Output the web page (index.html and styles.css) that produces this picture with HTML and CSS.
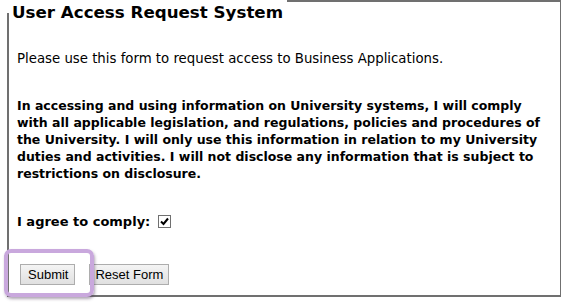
FILE: index.html
```html
<!DOCTYPE html>
<html lang="en">
  <head>
    <meta charset="UTF-8" />
    <title>User Access Request System</title>
    <link rel="stylesheet" href="styles.css">
  </head>
  <body>
    <form class="request-form">
      <div class="request-box">
        <h1>User Access Request System</h1>
        <p class="intro">Please use this form to request access to Business Applications.</p>
        <p class="terms">In accessing and using information on University systems, I will comply with all applicable legislation, and regulations, policies and procedures of the University. I will only use this information in relation to my University duties and activities. I will not disclose any information that is subject to restrictions on disclosure.</p>
        <p class="agree">
          <label for="comply">I agree to comply:</label>
          <span class="checkbox" id="comply">
            <svg width="9" height="9" viewBox="0 0 9 9"><path d="M1 4.5 L3.5 7 L8 1.5" fill="none" stroke="#000" stroke-width="2"/></svg>
          </span>
        </p>
        <div class="actions">
          <button type="submit" class="btn">Submit</button>
          <button type="reset" class="btn">Reset Form</button>
        </div>
      </div>
      <div class="highlight"></div>
    </form>
  </body>
</html>
```

FILE: styles.css
```css
body {
  margin: 0;
  background: #fff;
  font-family: "DejaVu Sans", Verdana, sans-serif;
  color: #000;
}

.request-form {
  position: relative;
  width: 561px;
  height: 305px;
  background: #fff;
}

.request-box {
  margin-left: 7px;
  padding: 0 14px 0 8px;
  width: 529px;
  height: 293px;
  border: 2px solid #707070;
}

.request-box h1 {
  display: inline-block;
  margin: -2px 0 0 -10px;
  padding: 0 4px 0 5px;
  height: 13px;
  background: #fff;
  font-size: 16.7px;
  line-height: 24px;
  font-weight: bold;
}

.intro {
  margin: 29px 0 0;
  font-size: 13.3px;
}

.terms {
  margin: 31px 0 0;
  font-size: 12.5px;
  font-weight: bold;
  line-height: 17px;
}

.agree {
  margin: 32px 0 0;
  font-size: 13px;
  font-weight: bold;
  display: flex;
  align-items: center;
  gap: 8px;
}

.checkbox {
  display: inline-flex;
  align-items: center;
  justify-content: center;
  width: 11px;
  height: 11px;
  border: 1px solid #707070;
  background: #fff;
}

.actions {
  margin-top: 35px;
  margin-left: 3px;
  display: flex;
  gap: 14px;
}

.btn {
  font-family: "Liberation Sans", Arial, sans-serif;
  font-size: 13px;
  color: #000;
  background: linear-gradient(#f4f4f4, #e0e0e0);
  border: 1px solid #adadad;
  padding: 1px 6px 1px 7px;
  height: 21px;
}

.btn + .btn {
  padding: 1px 5px;
}

.highlight {
  position: absolute;
  left: 4px;
  top: 249px;
  width: 82px;
  height: 40px;
  border: 4px solid #c9a8dd;
  border-radius: 7px;
  box-shadow: 1px 2px 3px rgba(80, 60, 90, 0.45);
}
```
